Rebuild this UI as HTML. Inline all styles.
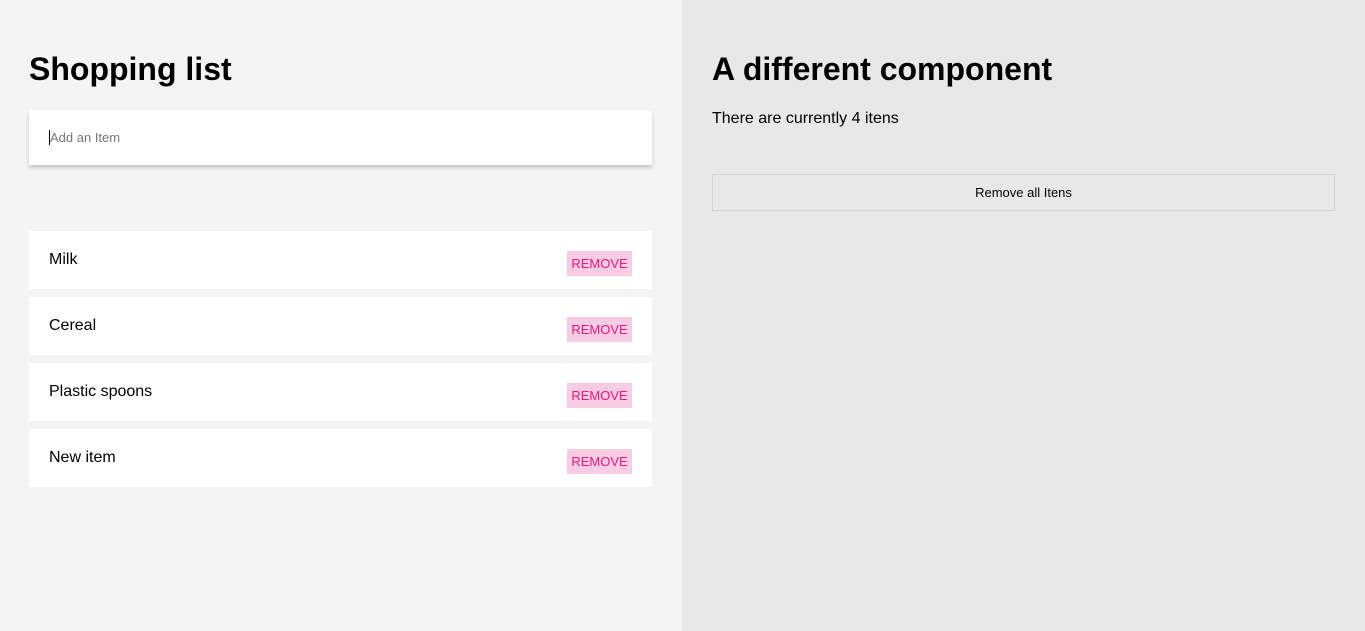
<!DOCTYPE html>
<html><head><style>
*{margin:0;padding:0;box-sizing:border-box}
body{width:1365px;height:631px;font-family:"Liberation Sans",Arial,sans-serif;display:flex;overflow:hidden}
.l{width:682px;height:631px;background:#f4f4f4;position:relative}
.r{flex:1;height:631px;background:#e8e8e8;position:relative}
h1{position:absolute;font-size:32px;font-weight:bold;color:#000;top:51px}
.in{position:absolute;left:29px;top:110px;width:623px;height:55px;background:#fff;box-shadow:0 3px 4px rgba(0,0,0,.18)}
.in span{position:absolute;left:20px;top:20px;font-size:13px;color:#777;border-left:1px solid #000;line-height:15px}
.it{position:absolute;left:29px;width:623px;height:58px;background:#fff}
.it .n{position:absolute;left:20px;top:20px;font-size:16px;color:#000}
.it .b{position:absolute;left:538px;top:20px;width:65px;height:25px;background:#f8cde3;color:#f0157f;font-size:13px;text-align:center;line-height:25px}
p{position:absolute;left:30px;top:110px;font-size:16px}
.btn{position:absolute;left:30px;top:174px;width:623px;height:37px;border:1px solid #d4d4d4;text-align:center;line-height:35px;font-size:13px}
</style></head><body>
<div class="l">
<h1 style="left:29px">Shopping list</h1>
<div class="in"><span>Add an Item</span></div>
<div class="it" style="top:231px"><div class="n">Milk</div><div class="b">REMOVE</div></div>
<div class="it" style="top:297px"><div class="n">Cereal</div><div class="b">REMOVE</div></div>
<div class="it" style="top:363px"><div class="n">Plastic spoons</div><div class="b">REMOVE</div></div>
<div class="it" style="top:429px"><div class="n">New item</div><div class="b">REMOVE</div></div>
</div>
<div class="r">
<h1 style="left:30px">A different component</h1>
<p>There are currently 4 itens</p>
<div class="btn">Remove all Itens</div>
</div>
</body></html>
